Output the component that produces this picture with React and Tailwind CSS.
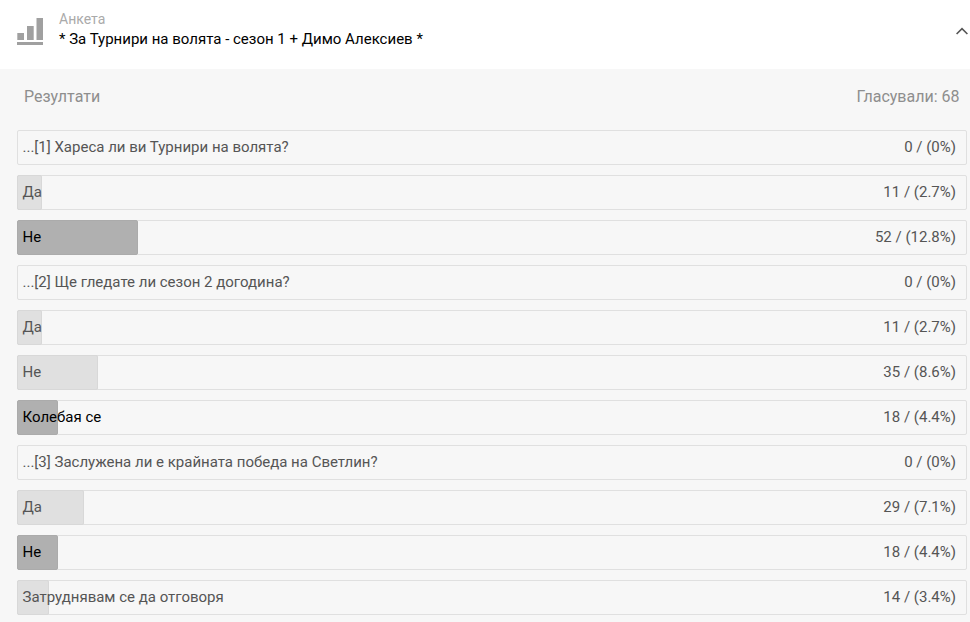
import React from 'react';

const rows = [
  { label: '...[1] Хареса ли ви Турнири на волята?', value: '0 / (0%)', bar: 0 },
  { label: 'Да', value: '11 / (2.7%)', bar: 25 },
  { label: 'Не', value: '52 / (12.8%)', bar: 121, top: true },
  { label: '...[2] Ще гледате ли сезон 2 догодина?', value: '0 / (0%)', bar: 0 },
  { label: 'Да', value: '11 / (2.7%)', bar: 25 },
  { label: 'Не', value: '35 / (8.6%)', bar: 81 },
  { label: 'Колебая се', value: '18 / (4.4%)', bar: 41, top: true },
  { label: '...[3] Заслужена ли е крайната победа на Светлин?', value: '0 / (0%)', bar: 0 },
  { label: 'Да', value: '29 / (7.1%)', bar: 67 },
  { label: 'Не', value: '18 / (4.4%)', bar: 41, top: true },
  { label: 'Затруднявам се да отговоря', value: '14 / (3.4%)', bar: 32 },
];

const PollIcon = () => (
  <svg width="26" height="27" viewBox="0 0 26 27" className="mb-[6px] text-[#a0a0a0]" fill="currentColor">
    <rect x="0.3" y="15" width="6.7" height="7" />
    <rect x="10" y="8" width="6.7" height="14" />
    <rect x="19.5" y="0" width="6.5" height="22" />
    <rect x="0" y="24" width="26" height="3" />
  </svg>
);

const ResultRow = ({ row }) => (
  <div className="relative flex h-[35px] items-center justify-between rounded-[2px] border border-[#e0e0e0] pl-[4.5px] pr-[10px]">
    {row.bar > 0 && (
      <div
        className={`absolute left-[-1px] top-[-1px] bottom-[-1px] rounded-[2px] border ${row.top ? 'border-[#ababab] bg-[#b0b0b0]' : 'border-[#d8d8d8] bg-[#e0e0e0]'}`}
        style={{ width: row.bar }}
      />
    )}
    <span className={`relative text-[15px] ${row.top ? 'text-black' : 'text-[#555555]'}`}>{row.label}</span>
    <span className="relative text-[15px] text-[#555555]">{row.value}</span>
  </div>
);

const App = () => {
  return (
    <div className="h-[622px] w-[970px] overflow-hidden bg-white font-['Roboto',sans-serif]">
      <div className="flex h-[69px] items-center bg-white pl-[17px] pr-[2px]">
        <PollIcon />
        <div className="mb-[10px] ml-[16px] flex flex-1 flex-col">
          <span className="text-[14px] leading-[18px] text-[#aaaaaa]">Анкета</span>
          <span className="text-[15px] leading-[22px] text-black">* За Турнири на волята - сезон 1 + Димо Алексиев *</span>
        </div>
        <svg width="12" height="8" viewBox="0 0 12 8" fill="none" stroke="#555555" strokeWidth="1.6" className="mb-[8px]">
          <path d="M0.6 7 L6 1.6 L11.4 7" />
        </svg>
      </div>
      <div className="h-[553px] bg-[#f7f7f7] px-[3px]">
        <div className="flex h-[55px] items-center justify-between pl-[21px] pr-[7.5px] text-[16px] text-[#8e8e8e]">
          <span>Резултати</span>
          <span>Гласували: 68</span>
        </div>
        <div className="ml-[14px] mt-[6px] flex w-[950px] flex-col gap-[10px]">
          {rows.map((row, i) => (
            <ResultRow key={i} row={row} />
          ))}
        </div>
      </div>
    </div>
  );
};

export default App;
